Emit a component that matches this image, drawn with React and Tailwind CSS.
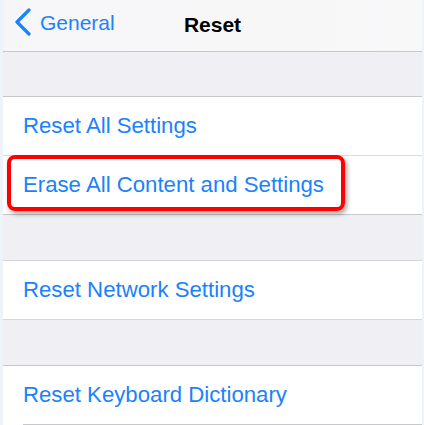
export default function App() {
  const font = { fontFamily: '"Liberation Sans", Arial, sans-serif' };

  return (
    <div className="flex h-[425px] w-full overflow-hidden bg-[#eef3fa]" style={font}>
      <div className="w-[3px] shrink-0" />
      <div className="flex flex-1 flex-col bg-[#efeff4]">
        {/* nav bar */}
        <header className="relative flex h-[52px] shrink-0 items-center border-b border-[#c8c7cc] bg-gradient-to-r from-[#f6f6f8] to-[#f8f8f9] pb-[7px]">
          <div className="flex items-center pl-[11px] text-[#1a82fb]">
            <svg width="18" height="28" viewBox="0 0 18 28" fill="none">
              <polyline
                points="15,2 3,14 15,26"
                stroke="#1a82fb"
                strokeWidth="3.2"
                strokeLinecap="round"
                strokeLinejoin="round"
              />
            </svg>
            <span className="ml-[8px] text-[21px] leading-none">General</span>
          </div>
          <h1 className="absolute left-1/2 top-[14px] -translate-x-1/2 text-[21px] font-bold leading-none text-black">
            Reset
          </h1>
        </header>

        <div className="h-[44px] shrink-0" />

        {/* section 1 */}
        <div className="shrink-0 border-y border-[#c8c7cc] bg-white">
          <Row label="Reset All Settings" />
          <div className="h-px bg-[#dcdce0]" />
          <div className="relative">
            <Row label="Erase All Content and Settings" />
            <div className="absolute left-[4px] top-[-1px] h-[56px] w-[338px] rounded-[8px] border-[4px] border-[#ff0000] shadow-[2px_3px_5px_rgba(0,0,0,0.35)]" />
          </div>
        </div>

        <div className="h-[45px] shrink-0" />

        {/* section 2 */}
        <div className="shrink-0 border-y border-[#d6d6da] bg-white">
          <Row label="Reset Network Settings" />
        </div>

        <div className="h-[45px] shrink-0" />

        {/* section 3 */}
        <div className="shrink-0 border-t border-[#c8c7cc] bg-white">
          <Row label="Reset Keyboard Dictionary" />
          <div className="ml-[20px] h-px bg-[#c8c7cc]" />
        </div>
      </div>
      <div className="w-[2px] shrink-0" />
    </div>
  );
}

function Row({ label }) {
  return (
    <div className="flex h-[58px] items-center pl-[20px] text-[22.2px] leading-none text-[#1a82fb]">
      {label}
    </div>
  );
}
